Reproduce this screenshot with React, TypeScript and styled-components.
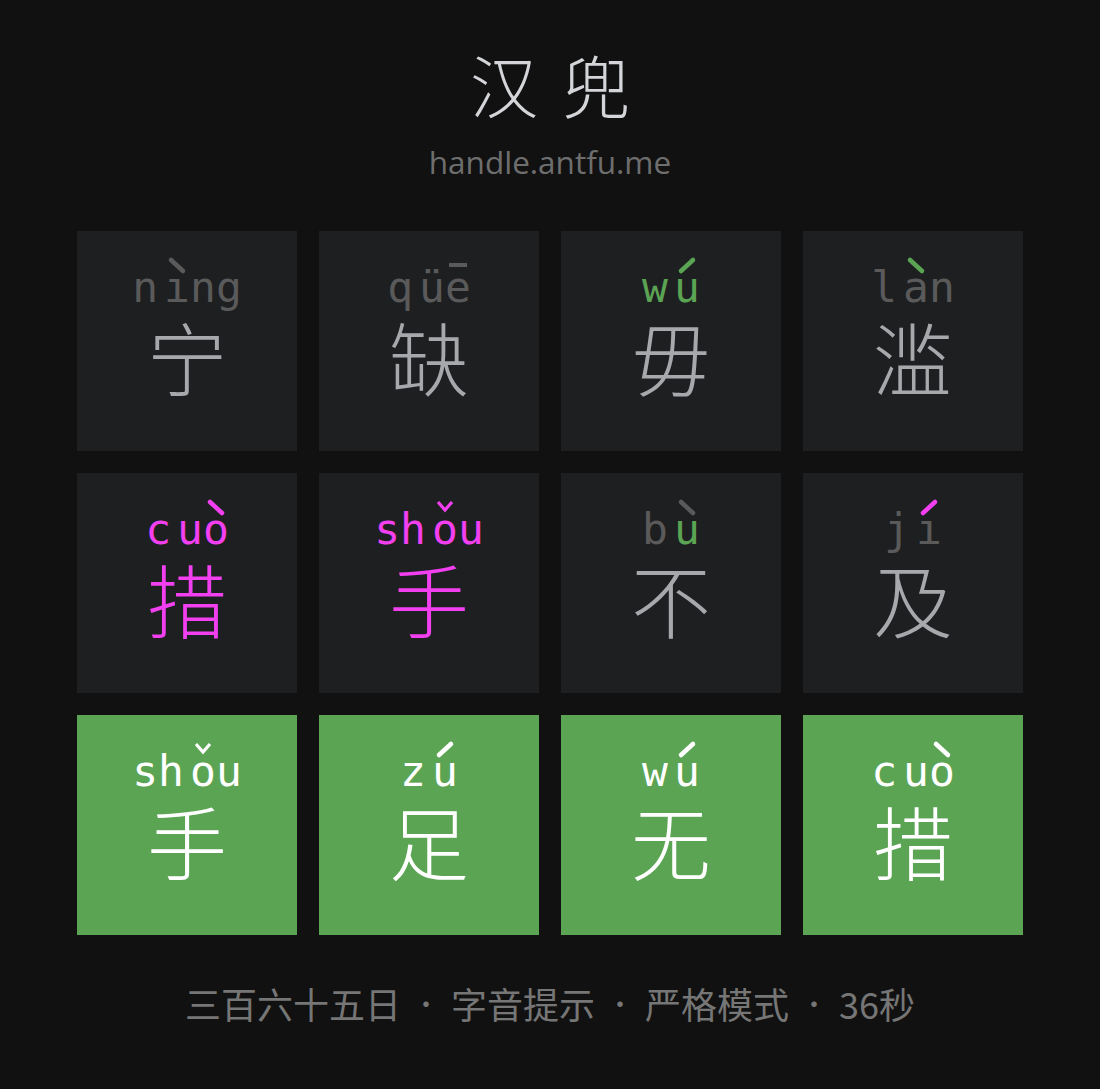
import React from 'react'
import styled, { createGlobalStyle } from 'styled-components'

const GRAY = '#5a5a5a'
const GREEN = '#5ba454'
const PINK = '#f23ff0'
const HANZI_GRAY = '#a6a8ac'
const WHITE = '#ffffff'

type Tone = 1 | 2 | 3 | 4

interface Letter {
  ch: string
  color: string
  tone?: Tone
  toneColor?: string
}

interface Cell {
  initial: Letter[]
  final: Letter[]
  hanzi: string
  hanziColor: string
  solved?: boolean
}

const L = (ch: string, color: string, tone?: Tone, toneColor?: string): Letter => ({
  ch,
  color,
  tone,
  toneColor: toneColor || color,
})

const rows: Cell[] = [
  { initial: [L('n', GRAY)], final: [L('ı', GRAY, 4), L('n', GRAY), L('g', GRAY)], hanzi: '宁', hanziColor: HANZI_GRAY },
  { initial: [L('q', GRAY)], final: [L('ü', GRAY), L('e', GRAY, 1)], hanzi: '缺', hanziColor: HANZI_GRAY },
  { initial: [L('w', GREEN)], final: [L('u', GREEN, 2)], hanzi: '毋', hanziColor: HANZI_GRAY },
  { initial: [L('l', GRAY)], final: [L('a', GRAY, 4, GREEN), L('n', GRAY)], hanzi: '滥', hanziColor: HANZI_GRAY },
  { initial: [L('c', PINK)], final: [L('u', PINK), L('o', PINK, 4)], hanzi: '措', hanziColor: PINK },
  { initial: [L('s', PINK), L('h', PINK)], final: [L('o', PINK, 3), L('u', PINK)], hanzi: '手', hanziColor: PINK },
  { initial: [L('b', GRAY)], final: [L('u', GREEN, 4, GRAY)], hanzi: '不', hanziColor: HANZI_GRAY },
  { initial: [L('j', GRAY)], final: [L('ı', GRAY, 2, PINK)], hanzi: '及', hanziColor: HANZI_GRAY },
  { initial: [L('s', WHITE), L('h', WHITE)], final: [L('o', WHITE, 3), L('u', WHITE)], hanzi: '手', hanziColor: WHITE, solved: true },
  { initial: [L('z', WHITE)], final: [L('u', WHITE, 2)], hanzi: '足', hanziColor: WHITE, solved: true },
  { initial: [L('w', WHITE)], final: [L('u', WHITE, 2)], hanzi: '无', hanziColor: WHITE, solved: true },
  { initial: [L('c', WHITE)], final: [L('u', WHITE), L('o', WHITE, 4)], hanzi: '措', hanziColor: WHITE, solved: true },
]

const GlobalStyle = createGlobalStyle`
  html, body {
    margin: 0;
    background: #111111;
  }
`

const Page = styled.div`
  display: flex;
  flex-direction: column;
  align-items: center;
  min-height: 1089px;
  padding-top: 42px;
  box-sizing: border-box;
`

const Title = styled.h1`
  margin: 0;
  font-family: 'Noto Sans CJK SC', sans-serif;
  font-weight: 300;
  font-size: 68px;
  line-height: 84px;
  letter-spacing: 24px;
  padding-left: 24px;
  color: #d3d5d9;
`

const Subtitle = styled.div`
  font-family: 'Open Sans', sans-serif;
  font-size: 31.5px;
  line-height: 40px;
  color: #6e6e6e;
  margin-top: 16px;
`

const Board = styled.div`
  display: grid;
  grid-template-columns: repeat(4, 220px);
  grid-auto-rows: 220px;
  gap: 22px;
  margin-top: 49px;
`

const Tile = styled.div<{ $solved?: boolean }>`
  display: flex;
  flex-direction: column;
  align-items: center;
  padding-top: 30px;
  box-sizing: border-box;
  background: ${(p) => (p.$solved ? GREEN : '#1e1f21')};
`

const PinyinRow = styled.div`
  display: flex;
  gap: 6px;
  height: 52px;
  font-family: 'DejaVu Sans Mono', monospace;
  font-size: 43px;
  line-height: 52px;
`

const Part = styled.span`
  display: flex;
`

const Char = styled.span<{ $color: string }>`
  position: relative;
  color: ${(p) => p.$color};
`

const ToneMark = styled.svg`
  position: absolute;
  top: -5px;
  left: 50%;
  margin-left: -10px;
  width: 20px;
  height: 18px;
  overflow: visible;
`

const Hanzi = styled.div<{ $color: string }>`
  font-family: 'Noto Sans CJK SC', sans-serif;
  font-weight: 300;
  font-size: 80px;
  line-height: 84px;
  color: ${(p) => p.$color};
`

const Footer = styled.div`
  display: flex;
  align-items: center;
  gap: 12px;
  margin-top: 43px;
  font-family: 'Noto Sans CJK SC', sans-serif;
  font-size: 36px;
  line-height: 50px;
  color: #767676;
`

const Dot = styled.span`
  font-size: 26px;
`

function Tone({ tone, color }: { tone: Tone; color: string }) {
  return (
    <ToneMark viewBox="0 0 20 18">
      {tone === 1 && <line x1="1" y1="9" x2="19" y2="9" stroke={color} strokeWidth="4" />}
      {tone === 2 && (
        <line x1="4" y1="15" x2="16" y2="4" stroke={color} strokeWidth="4.5" strokeLinecap="round" />
      )}
      {tone === 3 && (
        <polyline points="3,4 10,12 17,4" fill="none" stroke={color} strokeWidth="3.2" />
      )}
      {tone === 4 && (
        <line x1="4" y1="4" x2="16" y2="15" stroke={color} strokeWidth="4.5" strokeLinecap="round" />
      )}
    </ToneMark>
  )
}

function Letters({ letters }: { letters: Letter[] }) {
  return (
    <Part>
      {letters.map((l, i) => (
        <Char key={i} $color={l.color}>
          {l.ch}
          {l.tone && <Tone tone={l.tone} color={l.toneColor || l.color} />}
        </Char>
      ))}
    </Part>
  )
}

const footerParts = ['三百六十五日', '字音提示', '严格模式', '36秒']

export default function App() {
  return (
    <>
      <GlobalStyle />
      <Page>
        <Title>汉兜</Title>
        <Subtitle>handle.antfu.me</Subtitle>
        <Board>
          {rows.map((cell, i) => (
            <Tile key={i} $solved={cell.solved}>
              <PinyinRow>
                <Letters letters={cell.initial} />
                <Letters letters={cell.final} />
              </PinyinRow>
              <Hanzi $color={cell.hanziColor}>{cell.hanzi}</Hanzi>
            </Tile>
          ))}
        </Board>
        <Footer>
          {footerParts.map((p, i) => (
            <React.Fragment key={p}>
              {i > 0 && <Dot>·</Dot>}
              <span>{p}</span>
            </React.Fragment>
          ))}
        </Footer>
      </Page>
    </>
  )
}
